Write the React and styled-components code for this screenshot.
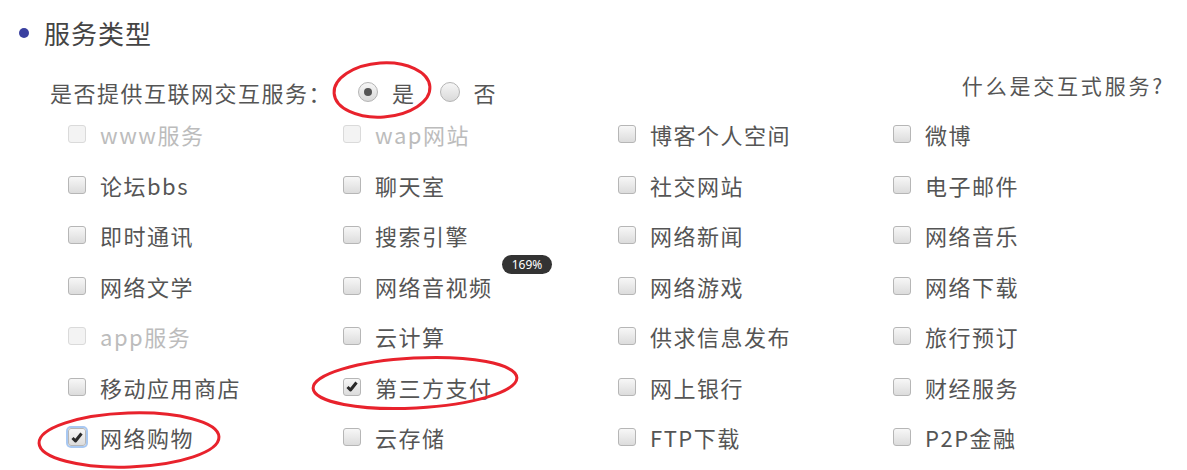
import React from "react";
import styled, { createGlobalStyle } from "styled-components";

const GlobalStyle = createGlobalStyle`
    body {
        margin: 0;
        background: #fff;
        font-family: "Noto Sans CJK SC", "Noto Sans", sans-serif;
        color: #555;
    }
`;

const services = [
    { name: "www服务", disabled: true },
    { name: "wap网站", disabled: true },
    { name: "博客个人空间" },
    { name: "微博" },
    { name: "论坛bbs" },
    { name: "聊天室" },
    { name: "社交网站" },
    { name: "电子邮件" },
    { name: "即时通讯" },
    { name: "搜索引擎" },
    { name: "网络新闻" },
    { name: "网络音乐" },
    { name: "网络文学" },
    { name: "网络音视频" },
    { name: "网络游戏" },
    { name: "网络下载" },
    { name: "app服务", disabled: true },
    { name: "云计算" },
    { name: "供求信息发布" },
    { name: "旅行预订" },
    { name: "移动应用商店" },
    { name: "第三方支付", checked: true },
    { name: "网上银行" },
    { name: "财经服务" },
    { name: "网络购物", checked: true, focused: true },
    { name: "云存储" },
    { name: "FTP下载" },
    { name: "P2P金融" },
];

const Page = styled.div`
    position: relative;
    width: 1187px;
    height: 470px;
    overflow: hidden;
`;

const Header = styled.div`
    display: flex;
    align-items: center;
    height: 66px;
    padding-left: 19px;
    gap: 15px;
`;

const Bullet = styled.span`
    flex: none;
    width: 10px;
    height: 10px;
    border-radius: 50%;
    background: #3a40a0;
`;

const Title = styled.h2`
    margin: 0;
    font-size: 26px;
    letter-spacing: 1px;
    font-weight: 400;
    color: #444;
    line-height: 1;
`;

const Question = styled.div`
    display: flex;
    align-items: center;
    height: 34px;
    margin-top: 9px;
    padding: 0 22px 0 50px;
    font-size: 22px;
    letter-spacing: 1.5px;
`;

const Options = styled.div`
    display: flex;
    align-items: center;
    gap: 24px;
    margin-left: 26px;
`;

const RadioLabel = styled.label`
    display: flex;
    align-items: center;
    gap: 14px;
`;

const Radio = styled.span`
    flex: none;
    width: 18px;
    height: 18px;
    border-radius: 50%;
    border: 1px solid #b4b4b4;
    background: linear-gradient(#f6f6f6, #d9d9d9);
    display: flex;
    align-items: center;
    justify-content: center;
    &::after {
        content: "";
        width: 8px;
        height: 8px;
        border-radius: 50%;
        background: ${({ checked }) => (checked ? "#555" : "transparent")};
    }
`;

const HelpLink = styled.a`
    margin-left: auto;
    align-self: flex-start;
    line-height: 20px;
    font-size: 21px;
    letter-spacing: 2.8px;
    color: #555;
    text-decoration: none;
`;

const Grid = styled.div`
    display: grid;
    grid-template-columns: repeat(4, 275px);
    grid-auto-rows: 50.5px;
    padding-left: 68px;
`;

const Item = styled.label`
    display: flex;
    align-items: center;
    gap: 14px;
    font-size: 22px;
    letter-spacing: 1.5px;
    color: ${({ disabled }) => (disabled ? "#bcbcbc" : "#555")};
`;

const Box = styled.span`
    flex: none;
    width: 16px;
    height: 16px;
    border-radius: 3px;
    border: 1px solid ${({ disabled }) => (disabled ? "#dadada" : "#b6b6b6")};
    background: ${({ disabled }) =>
        disabled ? "#f3f3f3" : "linear-gradient(#f7f7f7, #dcdcdc)"};
    box-shadow: ${({ focused }) => (focused ? "0 0 0 2px #a8c8f2" : "none")};
    display: flex;
    align-items: center;
    justify-content: center;
`;

const Marks = styled.svg`
    position: absolute;
    left: 0;
    top: 0;
    pointer-events: none;
`;

const Zoom = styled.div`
    position: absolute;
    left: 502px;
    top: 255px;
    width: 50px;
    height: 19px;
    border-radius: 10px;
    background: #333;
    color: #fff;
    font-family: "Noto Sans", sans-serif;
    font-size: 12px;
    line-height: 19px;
    text-align: center;
`;

function Check() {
    return (
        <svg width="12" height="11" viewBox="0 0 12 11">
            <path d="M1.5 6 L4.5 9 L10.5 1.5" fill="none" stroke="#2a2a2a" strokeWidth="3" strokeLinejoin="round" />
        </svg>
    );
}

export default function App() {
    return (
        <Page>
            <GlobalStyle />
            <Header>
                <Bullet />
                <Title>服务类型</Title>
            </Header>
            <Question>
                <span>是否提供互联网交互服务：</span>
                <Options>
                    <RadioLabel>
                        <Radio checked />
                        是
                    </RadioLabel>
                    <RadioLabel>
                        <Radio />
                        否
                    </RadioLabel>
                </Options>
                <HelpLink href="#">什么是交互式服务?</HelpLink>
            </Question>
            <Grid>
                {services.map((s) => (
                    <Item key={s.name} disabled={s.disabled}>
                        <Box disabled={s.disabled} focused={s.focused}>
                            {s.checked && <Check />}
                        </Box>
                        {s.name}
                    </Item>
                ))}
            </Grid>
            <Marks width="1187" height="470">
                <g fill="none" stroke="#e8222c" strokeWidth="3">
                    <ellipse cx="382" cy="90" rx="48" ry="27" transform="rotate(-4 382 90)" />
                    <ellipse cx="415" cy="383" rx="102" ry="25" transform="rotate(-3 415 383)" />
                    <ellipse cx="129" cy="440" rx="90" ry="27" transform="rotate(-2 129 440)" />
                </g>
            </Marks>
            <Zoom>169%</Zoom>
        </Page>
    );
}
